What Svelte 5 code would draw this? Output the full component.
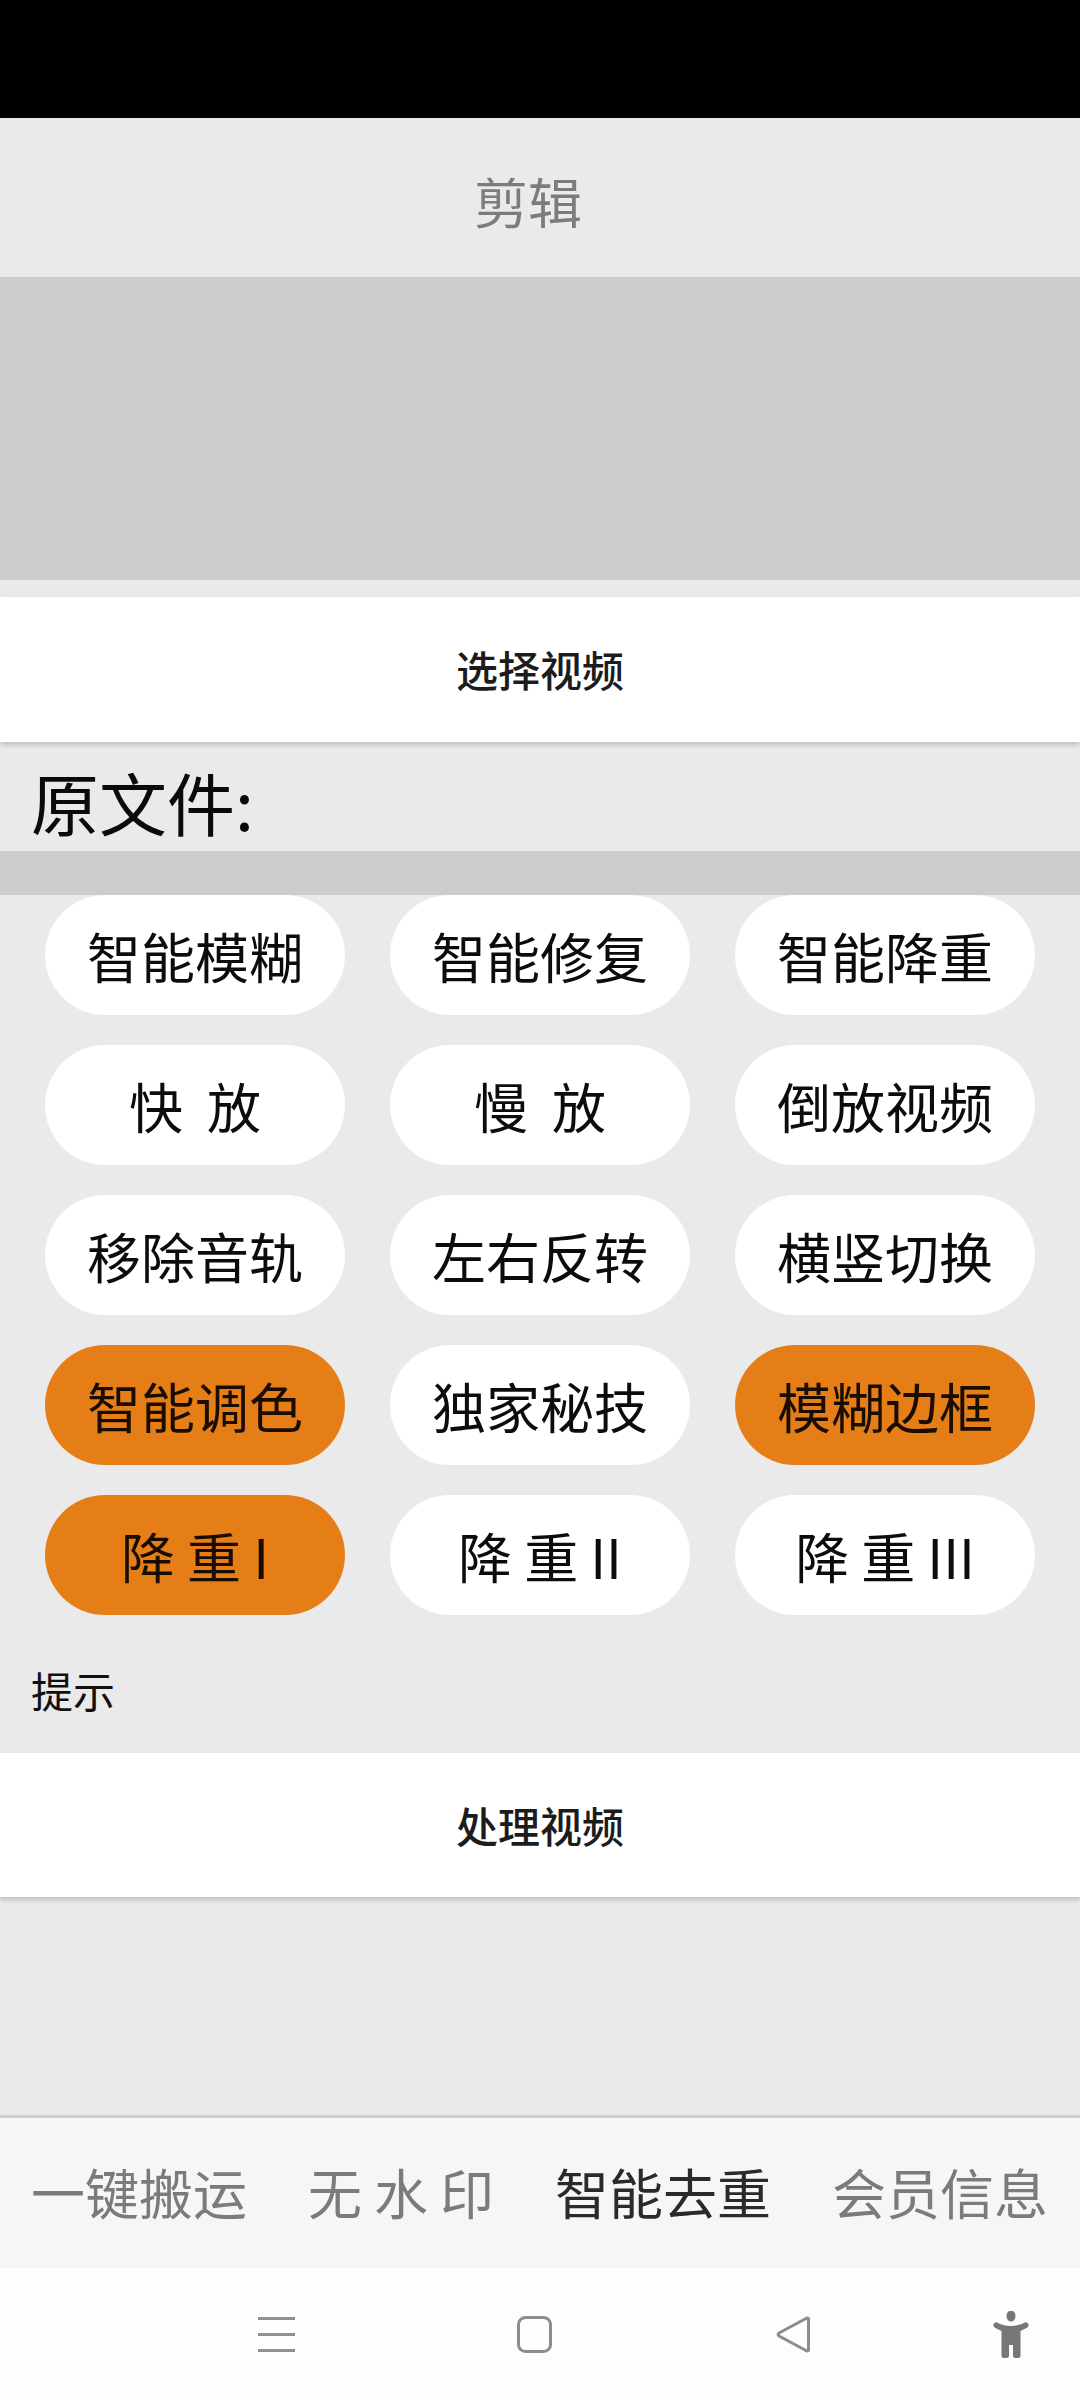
<script>
  const tools = [
    { label: '智能模糊' }, { label: '智能修复' }, { label: '智能降重' },
    { label: '快  放' }, { label: '慢  放' }, { label: '倒放视频' },
    { label: '移除音轨' }, { label: '左右反转' }, { label: '横竖切换' },
    { label: '智能调色', on: true }, { label: '独家秘技' }, { label: '模糊边框', on: true },
    { label: '降 重 I', on: true }, { label: '降 重 II' }, { label: '降 重 III' }
  ];
  const tabs = ['一键搬运', '无 水 印', '智能去重', '会员信息'];
  const activeTab = 2;
</script>

<div class="page">
  <div class="status"></div>
  <header class="title">剪辑</header>
  <div class="preview"></div>
  <div class="action first">选择视频</div>
  <div class="source">原文件:</div>
  <div class="band"></div>

  <div class="grid">
    {#each tools as tool}
      <div class="pill" class:on={tool.on}>{tool.label}</div>
    {/each}
  </div>

  <div class="hint">提示</div>
  <div class="action">处理视频</div>
  <div class="spacer"></div>

  <nav class="tabs">
    {#each tabs as tab, i}
      <span class="tab" class:active={i === activeTab}>{tab}</span>
    {/each}
  </nav>

  <div class="sysnav">
    <svg class="menu" width="37" height="35" viewBox="0 0 37 35">
      <path d="M0 1.5h37M0 17.5h37M0 33.5h37" fill="none" stroke="#919191" stroke-width="3" />
    </svg>
    <svg class="home" width="35" height="37" viewBox="0 0 35 37">
      <rect x="1.5" y="1.5" width="32" height="34" rx="7" fill="none" stroke="#8c8c8c" stroke-width="3" />
    </svg>
    <svg class="back" width="35" height="37" viewBox="0 0 35 37">
      <path d="M32.5 2.5 Q31.5 1.5 30 2.5 L3 17 Q1.5 18.5 3 20 L30 34.5 Q31.5 35.5 32.5 34.5 Z" fill="none" stroke="#8c8c8c" stroke-width="3" stroke-linejoin="round" />
    </svg>
    <svg class="person" width="36" height="47" viewBox="0 0 36 47">
      <ellipse cx="18" cy="5" rx="4.5" ry="5.5" fill="#777" />
      <path d="M0.5 13 Q0 15 1.5 16.5 L8.5 20 V45 Q8.5 47 12 47 Q16 47 16 45 V34 H20 V45 Q20 47 24 47 Q27.5 47 27.5 45 V20 L34.5 16.5 Q36 15 35.5 13 L33 11 Q26 15 18 15 Q10 15 3 11 Z" fill="#777" />
    </svg>
  </div>
</div>

<style>
  :global(body) {
    background: #eaeaea;
  }

  .page {
    display: flex;
    flex-direction: column;
    height: 2400px;
    overflow: hidden;
    background: #eaeaea;
    font-family: "Noto Sans CJK SC", "Noto Sans", sans-serif;
    color: #111;
  }

  .status {
    height: 118px;
    background: #000;
  }

  .title {
    height: 159px;
    display: flex;
    align-items: center;
    justify-content: center;
    padding: 5px 24px 0 0;
    box-sizing: border-box;
    font-size: 54px;
    color: #7c7c7c;
  }

  .preview {
    height: 303px;
    background: #cccccc;
  }

  .action {
    height: 144px;
    display: flex;
    align-items: center;
    justify-content: center;
    padding-bottom: 2px;
    box-sizing: border-box;
    background: #fff;
    font-size: 42px;
    font-weight: 500;
    color: #1c1c1c;
    box-shadow: 0 3px 5px rgba(0, 0, 0, 0.18);
  }

  .action.first {
    margin-top: 17px;
    height: 145px;
  }

  .source {
    height: 109px;
    padding: 10px 31px 0;
    box-sizing: border-box;
    display: flex;
    align-items: center;
    font-size: 68px;
    line-height: 1;
    color: #0a0a0a;
  }

  .band {
    height: 44px;
    background: #cccccc;
  }

  .grid {
    display: grid;
    grid-template-columns: repeat(3, 300px);
    grid-auto-rows: 120px;
    justify-content: space-between;
    row-gap: 30px;
    padding: 0 45px;
  }

  .pill {
    display: flex;
    align-items: center;
    justify-content: center;
    border-radius: 60px;
    background: #fff;
    font-size: 54px;
    white-space: pre;
    color: #0c0c0c;
  }

  .pill.on {
    background: #e67e17;
    color: #1a0d00;
  }

  .hint {
    height: 138px;
    padding: 10px 31px 0;
    box-sizing: border-box;
    display: flex;
    align-items: center;
    font-size: 42px;
    color: #111;
  }

  .spacer {
    flex: 1;
  }

  .tabs {
    height: 153px;
    box-sizing: border-box;
    display: flex;
    align-items: center;
    justify-content: space-between;
    padding: 0 32px 3px 31px;
    border-top: 3px solid #d0d0d0;
    background: #f6f6f6;
  }

  .tab {
    font-size: 54px;
    color: #7b7b7b;
  }

  .tab.active {
    color: #2a2a2a;
  }

  .sysnav {
    height: 132px;
    display: flex;
    align-items: center;
    background: #fdfdfd;
    padding-left: 258px;
  }

  .home {
    margin-left: 222px;
  }

  .back {
    margin-left: 224px;
  }

  .person {
    margin-left: 182px;
  }
</style>
